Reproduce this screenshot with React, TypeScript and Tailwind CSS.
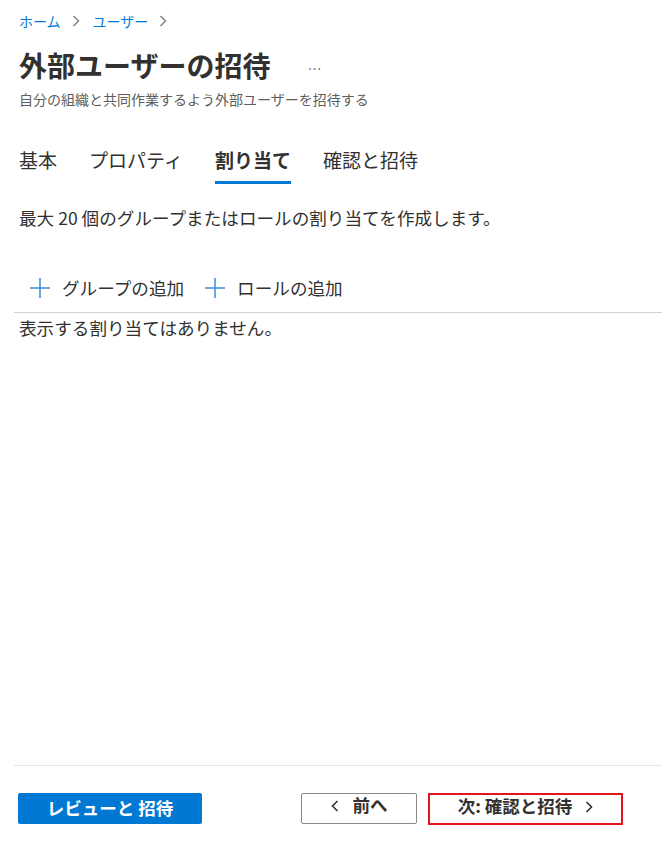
import React from "react";

const FONT = { fontFamily: '"Noto Sans CJK JP", "Noto Sans", sans-serif' };

function Chevron({ dir, className }: { dir: "left" | "right"; className?: string }) {
  return (
    <svg width="8" height="12" viewBox="0 0 8 12" className={className} fill="none">
      <path
        d={dir === "right" ? "M1.5 1 L6.5 6 L1.5 11" : "M6.5 1 L1.5 6 L6.5 11"}
        stroke="currentColor"
        strokeWidth="1.6"
      />
    </svg>
  );
}

function PlusIcon() {
  return (
    <svg width="20" height="20" viewBox="0 0 20 20" fill="none">
      <path d="M10 0 V20 M0 10 H20" stroke="#3f8ad8" strokeWidth="1.5" />
    </svg>
  );
}

const tabs = [
  { label: "基本", active: false },
  { label: "プロパティ", active: false },
  { label: "割り当て", active: true },
  { label: "確認と招待", active: false },
];

export default function App() {
  return (
    <div style={FONT} className="flex h-[849px] w-[662px] flex-col overflow-hidden bg-white pl-[19px] text-[#323130]">
      {/* breadcrumb */}
      <nav className="mt-[11px] flex h-[20px] items-center text-[14px] leading-[20px] text-[#0078d4]">
        <span>ホーム</span>
        <Chevron dir="right" className="ml-[11px] mr-[13px] text-[#8a8886]" />
        <span>ユーザー</span>
        <Chevron dir="right" className="ml-[11px] text-[#8a8886]" />
      </nav>

      <div className="mt-[16px] flex h-[36px] items-center">
        <h1 className="text-[28px] font-bold leading-[36px]">外部ユーザーの招待</h1>
        <span className="ml-[37px] mt-[6px] text-[14px] tracking-[1px] text-[#605e5c]">…</span>
      </div>
      <p className="mt-[6px] text-[14px] leading-[20px] text-[#605e5c]">
        自分の組織と共同作業するよう外部ユーザーを招待する
      </p>

      {/* tabs */}
      <div className="mt-[39px] flex gap-[32px]">
        {tabs.map((t) => (
          <div
            key={t.label}
            className={
              t.active
                ? "border-b-[3px] border-[#0078d4] pb-[9px] text-[19px] font-bold leading-[24px]"
                : "border-b-[3px] border-transparent pb-[9px] text-[19px] leading-[24px]"
            }
          >
            {t.label}
          </div>
        ))}
      </div>

      <p className="mt-[22px] text-[17.6px] leading-[24px]">
        最大 20 個のグループまたはロールの割り当てを作成します。
      </p>

      {/* command bar */}
      <div className="mt-[46px] flex h-[24px] items-center pl-[11px] text-[17.6px] leading-[24px]">
        <PlusIcon />
        <span className="ml-[12px]">グループの追加</span>
        <span className="ml-[21px]">
          <PlusIcon />
        </span>
        <span className="ml-[12px]">ロールの追加</span>
      </div>

      <div className="ml-[-5px] mt-[12px] h-px bg-[#d1d1d1]" />

      <p className="mt-[3px] text-[17.6px] leading-[24px]">表示する割り当てはありません。</p>

      {/* footer */}
      <div className="mt-auto">
        <div className="ml-[-5px] h-px bg-[#e6e6e6]" />
        <div className="ml-[-1px] mt-[27px] flex items-start pb-[24px]">
          <button className="flex h-[31px] w-[184px] items-center justify-center rounded-[2px] bg-[#0078d4] text-[17.5px] font-bold text-white">
            レビューと 招待
          </button>
          <button className="ml-[99px] flex h-[31px] w-[116px] items-start justify-center rounded-[2px] border border-[#8a8886] bg-white text-[17.5px] font-bold leading-[22px]">
            <span className="flex items-center">
              <Chevron dir="left" className="mr-[14px] mt-[1px]" />
              前へ
            </span>
          </button>
          <button className="ml-[11px] flex h-[32px] w-[195px] items-start justify-center border-2 border-[#e3141c] bg-white text-[17.5px] font-bold leading-[22px]">
            <span className="flex items-center">
              次: 確認と招待
              <Chevron dir="right" className="ml-[13px] mt-[1px]" />
            </span>
          </button>
        </div>
      </div>
    </div>
  );
}
